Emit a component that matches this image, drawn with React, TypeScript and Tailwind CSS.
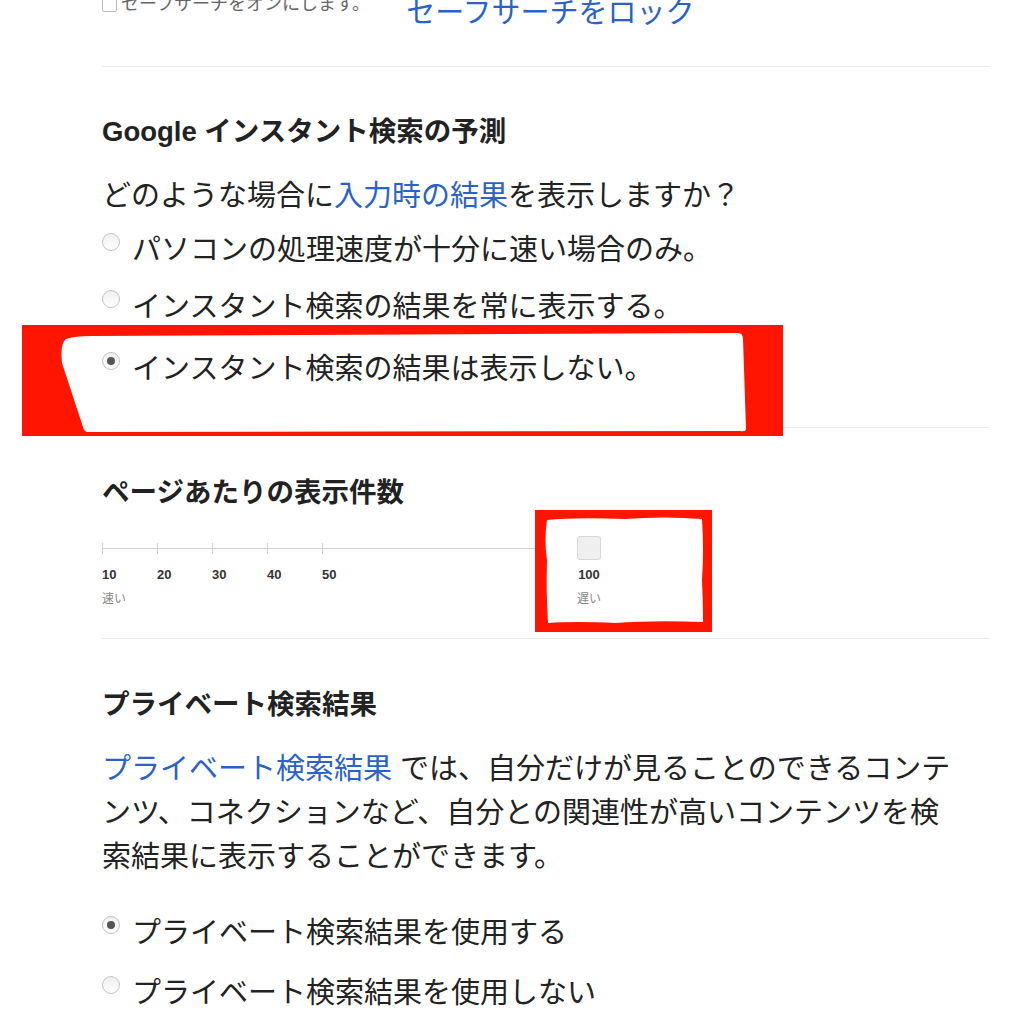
import type { ReactNode } from 'react'

const font = "font-['Liberation_Sans','Noto_Sans_CJK_JP',sans-serif]"

function Radio({ checked = false }: { checked?: boolean }) {
  return (
    <span className="mt-[1px] flex h-[18px] w-[18px] shrink-0 items-center justify-center rounded-full border border-[#c4c4c4] bg-gradient-to-b from-[#f0f0f0] to-white">
      {checked && <span className="h-[8px] w-[8px] rounded-full bg-[#555]" />}
    </span>
  )
}

function RadioRow({ checked, children, className = '' }: { checked?: boolean; children: ReactNode; className?: string }) {
  return (
    <div className={`relative flex items-start gap-[12px] text-[29px] leading-[36px] text-[#222] ${className}`}>
      <Radio checked={checked} />
      <span>{children}</span>
    </div>
  )
}

function Divider({ className = '' }: { className?: string }) {
  return <div className={`border-t border-[#ececec] ${className}`} />
}

function Heading({ children, className = '' }: { children: ReactNode; className?: string }) {
  return <h2 className={`text-[27.5px] leading-[32px] font-bold text-[#222] ${className}`}>{children}</h2>
}

const steps = ['10', '20', '30', '40', '50']

function Slider() {
  return (
    <div className="mt-[27px] flex">
      <div className="flex w-[475px] flex-col">
        <div className="flex h-[24px] items-center">
          {steps.map(s => (
            <div key={s} className="flex w-[55px] items-center">
              <div className="h-[11px] w-px bg-[#cfcfcf]" />
              <div className="h-px flex-1 bg-[#cfcfcf]" />
            </div>
          ))}
          <div className="h-px flex-1 bg-[#cfcfcf]" />
        </div>
        <div className="mt-[7px] flex text-[13px] leading-[16px] font-bold text-[#333]">
          {steps.map(s => (
            <span key={s} className="w-[55px]">{s}</span>
          ))}
        </div>
        <span className="mt-[8px] text-[12px] leading-[16px] text-[#888]">速い</span>
      </div>
      <div className="relative z-10 flex w-[24px] flex-col items-center">
        <div className="h-[24px] w-[24px] rounded-[3px] border border-[#d6d6d6] bg-[#efefef]" />
        <span className="mt-[7px] text-[13px] leading-[16px] font-bold text-[#333]">100</span>
        <span className="mt-[8px] whitespace-nowrap text-[12px] leading-[16px] text-[#888]">遅い</span>
      </div>
    </div>
  )
}

export default function App() {
  return (
    <div className={`relative h-[1024px] w-[1024px] overflow-hidden bg-white ${font}`}>
      {/* red annotation around the third radio */}
      <svg className="absolute left-[22px] top-[325px]" width="761" height="111" viewBox="0 0 761 111">
        <rect width="761" height="111" fill="#ff1500" />
        <path
          d="M44 14 Q52 11 70 11 L716 8 Q721 8 721 14 L724 104 Q724 107 718 106 L66 107 Q62 107 61 102 L40 38 Q38 18 44 14 Z"
          fill="#fff"
        />
      </svg>
      {/* red annotation around the slider end */}
      <svg className="absolute left-[535px] top-[510px]" width="177" height="122" viewBox="0 0 177 122">
        <rect width="177" height="122" fill="#ff1500" />
        <path
          d="M12 10 Q40 7 90 9 Q130 6 167 9 Q169 40 167 70 Q168 95 168 112 Q120 110 80 113 Q40 111 13 113 Q11 80 12 50 Q9 30 12 10 Z"
          fill="#fff"
        />
      </svg>

      <div className="pl-[102px] pr-[34px]">
        <div className="relative mt-[-7px] flex h-[40px] items-center">
          <div className="mb-[18px] flex items-center">
            <span className="h-[15px] w-[15px] rounded-[2px] border border-[#bdbdbd] bg-white" />
            <span className="ml-[4px] text-[18px] leading-[22px] text-[#666]">セーフサーチをオンにします。</span>
          </div>
          <a className="ml-[36px] text-[29px] leading-[40px] text-[#2a62c9]">セーフサーチをロック</a>
        </div>

        <Divider className="mt-[33px]" />

        <Heading className="mt-[49px]">Google インスタント検索の予測</Heading>

        <p className="mt-[30px] text-[29px] leading-[36px] text-[#222]">
          どのような場合に<a className="text-[#2a62c9]">入力時の結果</a>を表示しますか？
        </p>

        <RadioRow className="mt-[18px]">パソコンの処理速度が十分に速い場合のみ。</RadioRow>
        <RadioRow className="mt-[21px]">インスタント検索の結果を常に表示する。</RadioRow>
        <RadioRow checked className="mt-[26px]">インスタント検索の結果は表示しない。</RadioRow>

        <Divider className="mt-[40px]" />

        <Heading className="mt-[49px]">ページあたりの表示件数</Heading>

        <Slider />

        <Divider className="mt-[31px]" />

        <Heading className="mt-[50px]">プライベート検索結果</Heading>

        <p className="mt-[26px] w-[855px] text-[29px] leading-[44px] text-[#222]">
          <a className="text-[#2a62c9]">プライベート検索結果</a> では、自分だけが見ることのできるコンテンツ、コネクションなど、自分との関連性が高いコンテンツを検索結果に表示することができます。
        </p>

        <RadioRow checked className="mt-[36px]">プライベート検索結果を使用する</RadioRow>
        <RadioRow className="mt-[24px]">プライベート検索結果を使用しない</RadioRow>
      </div>
    </div>
  )
}
